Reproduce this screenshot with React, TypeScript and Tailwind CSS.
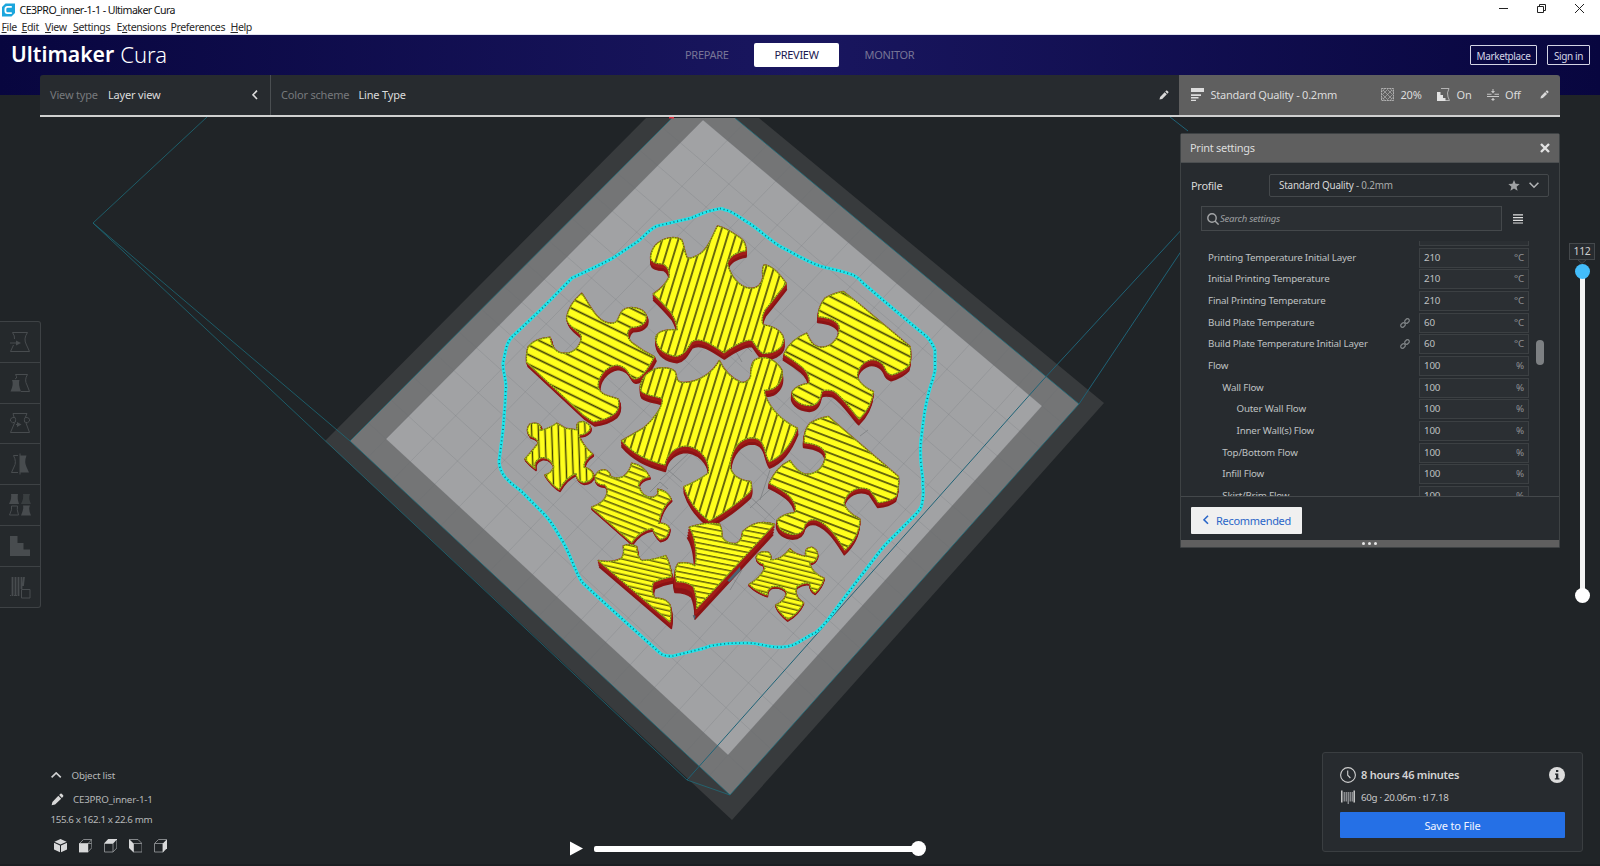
import React from 'react';

type Piece = { d: string; at: [number, number]; depth: [number, number]; fill: string };

const pieces: Piece[] = [
  {
    at: [0, 0], depth: [5, 13], fill: 'sA',
    d: 'M305,310 C330,345 350,400 395,400 C420,400 412,375 430,360 C450,345 490,355 498,375 C503,400 480,412 455,412 C435,425 440,450 465,465 Q490,485 523,500 Q500,545 480,560 Q465,570 458,565 C445,555 445,530 410,525 C375,530 350,565 355,595 C365,620 395,618 415,628 Q420,655 405,670 Q380,690 340,695 L310,675 L140,517 Q138,490 145,470 Q165,445 210,442 C215,470 225,490 255,490 C290,490 308,455 303,435 C290,420 260,405 260,385 Q265,345 305,310Z',
  },
  {
    at: [0, 0], depth: [1, 19], fill: 'sB',
    d: 'M713,108 C700,130 685,180 655,195 Q640,205 622,205 C612,185 612,165 605,150 C590,140 560,140 540,155 C520,165 512,190 512,205 C515,218 530,222 550,222 Q570,235 568,260 Q555,290 520,312 Q545,335 575,370 Q590,395 592,420 C570,418 530,420 527,445 C530,480 560,495 590,499 C615,495 625,470 635,455 C660,440 690,460 732,488 Q785,450 815,450 C825,460 835,485 850,490 C870,492 910,480 911,450 C910,430 890,410 850,405 Q840,390 855,360 Q895,310 918,280 Q880,225 852,225 Q845,240 850,258 C845,290 825,296 810,295 C775,292 750,255 742,220 Q750,190 797,182 Q800,155 775,140 Q740,115 713,108Z',
  },
  {
    at: [0, 0], depth: [1, 19], fill: 'sB',
    d: 'M718,512 C700,545 660,577 610,578 C585,577 592,560 585,545 C570,530 530,530 510,545 C485,560 475,590 485,605 C500,618 530,618 547,626 C550,650 520,690 490,715 L425,752 Q470,805 555,825 C560,790 590,768 620,768 C670,775 690,820 685,850 Q650,875 612,890 Q630,950 688,993 Q750,960 805,910 Q818,900 812,875 C770,870 752,850 750,825 C755,770 785,745 815,743 C860,745 850,790 868,815 Q920,795 952,715 Q880,680 855,615 L853,600 C890,603 912,570 905,540 C885,505 850,495 825,510 Q812,520 812,560 Q805,578 785,578 Q740,560 718,512Z',
  },
  {
    at: [690, 30], depth: [-2, 17], fill: 'sC',
    d: 'M400,275 L445,310 L600,440 Q605,470 598,495 Q580,515 545,525 Q530,520 525,505 C515,480 490,478 480,480 C450,490 440,515 443,535 C455,560 480,570 490,575 Q485,620 448,657 C430,640 400,590 370,573 Q345,567 335,575 Q330,615 300,617 C260,615 245,590 247,575 Q260,555 298,550 Q300,520 275,500 Q250,480 222,463 Q240,420 290,400 C300,420 305,440 335,442 C370,440 390,410 388,380 Q380,355 325,350 Q325,320 345,295 Q370,280 400,275Z',
  },
  {
    at: [690, 660], depth: [-2, 14], fill: 'sD',
    d: 'M355,20 L565,200 Q568,235 558,260 Q540,275 505,278 Q490,255 480,240 C450,225 410,240 402,280 C410,310 440,320 450,328 Q448,380 405,420 C385,390 360,345 320,330 Q295,325 285,345 Q280,375 245,373 C210,368 200,345 202,330 Q220,312 255,308 Q262,285 240,260 Q220,240 178,220 Q200,170 240,152 Q260,185 285,193 C320,195 345,170 347,135 Q345,105 283,98 Q280,65 300,40 Q325,25 355,20Z',
  },
  {
    at: [0, 660], depth: [3, 6], fill: 'sE',
    d: 'M230,40 L256,55 L292,60 Q285,35 310,35 Q338,45 327,62 Q315,75 295,75 Q310,110 337,132 Q310,150 312,172 Q335,178 340,195 Q335,215 310,217 Q290,212 288,190 Q260,200 237,238 Q215,225 195,195 Q215,190 222,170 Q210,140 185,143 Q160,150 165,175 Q145,160 135,147 Q155,125 175,100 Q175,85 150,78 Q135,60 150,42 Q175,35 182,50 L180,62 Q210,55 230,40Z',
  },
  {
    at: [0, 660], depth: [2, 7], fill: 'sF',
    d: 'M455,160 Q490,165 508,200 Q480,205 475,225 Q485,265 520,262 Q540,255 533,238 Q560,240 573,267 Q545,290 535,340 Q560,338 568,355 Q565,385 540,388 Q525,375 518,355 Q480,360 455,398 L335,292 Q385,275 382,235 L375,225 Q345,225 345,200 Q355,178 375,180 Q390,185 390,198 Q405,210 430,200 Q450,185 455,160Z',
  },
  {
    at: [0, 660], depth: [4, 19], fill: 'sG',
    d: 'M430,408 Q450,398 470,410 Q470,440 485,452 Q520,450 557,437 Q570,460 575,500 Q545,505 520,517 Q510,545 525,565 Q555,562 570,585 Q575,612 570,636 L355,452 Q400,460 425,445 Q434,430 430,408Z',
  },
  {
    at: [0, 660], depth: [-5, 32], fill: 'sH',
    d: 'M628,352 Q680,335 718,342 Q728,360 725,380 Q740,405 770,400 Q788,390 788,365 Q830,325 883,343 L650,595 Q652,560 640,530 Q625,515 590,515 Q580,480 595,460 Q625,455 645,468 Q652,440 645,400 Q640,370 628,352Z',
  },
  {
    at: [690, 660], depth: [0, 5], fill: 'sI',
    d: 'M240,417 Q255,435 290,440 Q280,415 305,412 Q325,420 322,440 Q315,460 298,458 Q305,490 342,505 Q335,530 315,548 Q300,540 300,520 Q280,515 260,530 Q250,560 280,578 Q265,610 233,628 Q205,605 198,585 Q230,570 230,545 Q215,525 185,530 Q170,540 172,555 Q140,545 118,523 Q150,505 165,475 L160,462 Q138,455 140,438 Q150,422 175,427 Q185,435 182,450 Q215,450 240,417Z',
  },
];

const hatches: [string, number, number, number][] = [
  ['sA', 26, 26, 6.5], ['sB', -73, 23, 6], ['sC', 27, 26, 6.5], ['sD', 21, 22, 6], ['sE', -92, 20, 5.5],
  ['sF', 21, 18, 5], ['sG', 13, 15, 4.5], ['sH', 11, 16, 4.5], ['sI', 14, 15, 4.5],
];

const skirt =
  'M718,209 C700,212 695,218 687,219 L657,226 C648,230 643,238 637,242 L613,258 C598,266 585,272 572,278 C560,290 545,306 533,317 L512,337 C506,343 506,350 503,363 C503,375 507,380 505.7,390 C505,410 504,415 503,430 L499,462 C500,470 502,473 505,477 C512,485 518,488 523,493 L543,513 C550,520 555,528 560,537 C570,552 575,572 582,582 C592,592 608,606 620,617 L660,653 C665,657 670,656 673,656 L697,650 C705,648 708,647 710,646 C725,643 735,643 747,643 C760,643 770,648 780,647 C795,648 803,638 815,633 C822,628 828,620 833,613 L860,577 C870,565 880,550 887,543 L913,517 C918,512 922,508 922,503 C925,490 922,490 923,480 C920,460 920,450 921,440 C923,425 924,412 927,400 C930,385 934,378 935,370 L935,350 C933,345 930,340 927,337 L897,312 L863,283 C858,277 855,276 853,275 C842,271 830,269 820,266 C808,262 795,254 783,248 C770,241 758,228 747,222 C738,216 730,210 725,210 Q722,208 718,209Z';

const lerp = (a: number[], b: number[], t: number) => [a[0] + (b[0] - a[0]) * t, a[1] + (b[1] - a[1]) * t];

function PlateGrid() {
  const top = [703, 120], right = [1042, 406], bottom = [728, 755], left = [386, 439];
  const n = 14;
  const lines: number[][][] = [];
  for (let i = -1; i <= n + 1; i++) {
    const t = i / n;
    const a1 = lerp(top, right, t), b1 = lerp(left, bottom, t);
    lines.push([lerp(a1, b1, -0.11), lerp(a1, b1, 1.11)]);
    const a2 = lerp(top, left, t), b2 = lerp(right, bottom, t);
    lines.push([lerp(a2, b2, -0.11), lerp(a2, b2, 1.11)]);
  }
  return (
    <g stroke="#6b6f73" strokeOpacity="0.2" strokeWidth="1" clipPath="url(#bed)">
      {lines.map(([a, b], i) => (
        <line key={i} x1={a[0]} y1={a[1]} x2={b[0]} y2={b[1]} />
      ))}
    </g>
  );
}

function Scene() {
  return (
    <svg className="absolute inset-0" width="1600" height="866" viewBox="0 0 1600 866">
      <defs>
        <clipPath id="bed"><polygon points="672,118 735,118 1079,404 730,795 350,441" /></clipPath>
        {hatches.map(([id, angle, gap, w]) => (
          <pattern key={id} id={id} width="60" height={gap} patternUnits="userSpaceOnUse" patternTransform={`rotate(${angle})`}>
            <rect width="60" height={gap} fill="#ffff1c" />
            <rect y={gap / 2} width="60" height={w} fill="#a3a312" />
            <rect y={gap / 2 + w * 0.22} width="60" height={w * 0.56} fill="#3f3f06" />
          </pattern>
        ))}
      </defs>
      <polygon points="646,118 759,118 1104,403 732,820 325,441" fill="#383b3d" />
      <polygon points="672,118 735,118 1079,404 730,795 350,441" fill="#747576" />
      <polygon points="703,120 1042,406 728,755 386,439" fill="#a1a2a4" />
      <PlateGrid />
      <g stroke="#1c6f7e" strokeWidth="1" fill="none">
        <path d="M207,117 L93,223 L350,441 M93,223 L687,780 L730,795 M735,118 L1079,404 L730,795 M672,118 L350,441 L730,795" strokeOpacity="0.75" />
        <path d="M1170,117 L1188,131 M1079,404 L1184,247 M1184,227 L1042,381 M1042,381 L687,780" stroke="#1f6377" />
      </g>
      <rect x="669" y="117" width="5" height="1.5" fill="#e03040" />
      <g stroke="#7d8083" strokeWidth="0.8" fill="none">
        <path d="M722,358 L745,345 L752,352 M735,350 L742,362 M660,480 L690,452 M668,470 L682,482 M650,492 L660,482 L668,489 M745,492 L775,520 M750,508 L780,480 M760,500 L770,470 M730,590 L742,570 M860,436 L868,430" />
      </g>
      <path d={skirt} fill="none" stroke="#1fe6ec" strokeWidth="3.2" />
      <path d={skirt} fill="none" stroke="#12747d" strokeWidth="1.7" strokeDasharray="1 2.8" />
      <g transform="translate(480 190) scale(0.333333)">
        {pieces.map((p, i) => (
          <g key={i} transform={`translate(${p.at[0]} ${p.at[1]})`} strokeLinejoin="round">
            {[1, 0.75, 0.5, 0.25, 0].map((k) => (
              <path key={k} d={p.d} transform={`translate(${p.depth[0] * k} ${p.depth[1] * k})`} fill={k > 0.6 ? '#921316' : '#ab1a1a'} stroke={k > 0.6 ? '#8c1315' : '#a11c18'} strokeWidth="5" />
            ))}
            <path d={p.d} fill={`url(#${p.fill})`} stroke="#9cd01c" strokeWidth="3.5" />
            <path d={p.d} fill="none" stroke="#5d3a0c" strokeWidth="2.4" strokeDasharray="4 4" />
          </g>
        ))}
        <path d="M742,1172 L780,1130 L782,1142 L748,1176Z" fill="#4b6472" />
        <path d="M638,1275 L647,1277 L644,1290Z" fill="#4d6170" />
      </g>
    </svg>
  );
}

const Pencil = ({ s }: { s: number }) => (
  <svg width={s} height={s} viewBox="0 0 12 12" fill="#d8d8d8">
    <path d="M0.6 11.4 L1.3 8.3 L6.8 2.6 L9.4 5.2 L3.8 10.7Z M7.5 1.9 L8.7 0.7 Q9.3 0.3 9.9 0.8 L11.2 2.1 Q11.7 2.7 11.2 3.3 L10.1 4.5Z" />
  </svg>
);

const Chevron = ({ d, w, h }: { d: string; w: number; h: number }) => (
  <svg width={w} height={h} viewBox={`0 0 ${w} ${h}`} fill="none" stroke="currentColor" strokeWidth="1.6"><path d={d} /></svg>
);

const tools = [
  <g key="move"><path d="M2.5 0.5 H17.5 Q13 7 16.5 13 L19.5 19.5 H0.5 L3.5 13 M4.5 7 Q5 4 2.5 0.5" fill="none" /><path d="M0 11 H8" /><path d="M6 8.5 L11 11 L6 13.5Z" stroke="none" /></g>,
  <g key="scale"><path d="M5 6 L6.5 5 Q7 3.5 5.5 1.5 H17.5 Q14 7 17 12 L19.5 18.5 H11" fill="none" /><path d="M2 7 H9.5 Q8 11 11 18.5 H0.5 Q4 11 2 7Z" stroke="none" /></g>,
  <g key="rotate"><path d="M3 0.5 H17 L15.5 4 M4.5 10 L0.5 19.5 H19.5 L16 10 M4 4 L3 0.5" fill="none" /><path d="M5 4.5 Q0 4 0.5 8 Q2 11 5.5 9 Q6 6 5 4.5 M15 4.5 Q20 4 19.5 8 Q18 11 14.5 9 Q14 6 15 4.5" fill="none" /><path d="M6 11.5 H8" /><path d="M7 9 L11.5 11.5 L7 14Z" stroke="none" /></g>,
  <g key="mirror"><path d="M8 1.5 H3.5 Q7 8 4 13 L1.5 18.5 H8" fill="none" /><path d="M10 1.5 H16.5 Q14 8 16.5 13 L19 18.5 H10Z" stroke="none" /><path d="M10 -0.5 V20.5" /></g>,
  <g key="each" stroke="none"><path d="M1 -1 H8 Q7 3 9 9 H-1 Q2 3 1 -1Z" /><path d="M13 -1 H20 Q18 3 21 9 H11 Q14 3 13 -1Z" opacity="0.6" /><path d="M13 10.5 H20 Q18 14 21 20.5 H11 Q14 14 13 10.5Z" /><path d="M1.5 11 H7.5 Q6.5 14 8.5 20 H-0.5 Q2.5 14 1.5 11Z" fill="none" stroke="#484c4f" /></g>,
  <path key="support" d="M0 0 H7.5 V7 H13.5 V13.5 H20 V20 H0Z" stroke="none" />,
  <g key="blocker"><path d="M2.5 0 V19 M5.5 0 V19 M8.5 0 V19 M11.5 0 V12 M14 0 L13 9" strokeWidth="1.8" fill="none" /><path d="M11.5 12.5 H20 V21 H11.5Z" fill="none" /><path d="M0 18.5 H10" strokeDasharray="1 1" /></g>,
];

const settings: [string, number, string, string, boolean?][] = [
  ['Printing Temperature', 0, '210', '°C'],
  ['Printing Temperature Initial Layer', 0, '210', '°C'],
  ['Initial Printing Temperature', 0, '210', '°C'],
  ['Final Printing Temperature', 0, '210', '°C'],
  ['Build Plate Temperature', 0, '60', '°C', true],
  ['Build Plate Temperature Initial Layer', 0, '60', '°C', true],
  ['Flow', 0, '100', '%'],
  ['Wall Flow', 1, '100', '%'],
  ['Outer Wall Flow', 2, '100', '%'],
  ['Inner Wall(s) Flow', 2, '100', '%'],
  ['Top/Bottom Flow', 1, '100', '%'],
  ['Infill Flow', 1, '100', '%'],
  ['Skirt/Brim Flow', 1, '100', '%'],
];
const indent = ['pl-0', 'pl-[14.3px]', 'pl-[28.5px]'];

function PrintSettings() {
  return (
    <div className="mt-[16px] flex h-[415px] w-[380px] flex-col rounded-t-[2px] border border-[#3e4244] bg-[#272b2f]">
      <div className="flex h-[29px] shrink-0 items-center justify-between border-b border-[#4c4f51] bg-[#5f5f5f] pb-px pl-[9px] pr-[9px] text-[11px] tracking-[-0.28px] text-[#dcdcdc]">
        <span>Print settings</span>
        <svg width="10" height="10" viewBox="0 0 10 10" stroke="#e2e2e2" strokeWidth="2.4"><path d="M1 1 L9 9 M9 1 L1 9" /></svg>
      </div>
      <div className="mt-[11px] flex h-[23px] shrink-0 items-center pl-[10px]">
        <span className="w-[78px] text-[11px] tracking-[-0.28px] text-[#d8d8d8]">Profile</span>
        <div className="flex h-[23px] w-[280px] items-center rounded-[2px] border border-[#44484b] bg-[#272b2f] pl-[9px] text-[9.9px] tracking-[-0.2px] text-[#d8d8d8]">
          <span className="flex-1 whitespace-nowrap">Standard Quality <span className="text-[#a9abac]">- 0.2mm</span></span>
          <svg width="12" height="11" viewBox="0 0 12 11" fill="#9fa1a3"><path d="M6 0 L7.6 3.7 L11.7 4 L8.6 6.7 L9.6 10.7 L6 8.5 L2.4 10.7 L3.4 6.7 L0.3 4 L4.4 3.7Z" /></svg>
          <span className="ml-[9px] mr-[9px] text-[#b2b4b6]"><Chevron d="M0.6 0.8 L5 5.2 L9.4 0.8" w={10} h={7} /></span>
        </div>
      </div>
      <div className="mt-[9px] flex h-[25px] shrink-0 items-center pl-[20px]">
        <div className="flex h-[25px] w-[301px] items-center border border-[#44484b] bg-[#2b2f33] pl-[5px]">
          <svg width="12" height="12" viewBox="0 0 12 12" fill="none" stroke="#a4a6a8" strokeWidth="1.4"><circle cx="5" cy="5" r="4.2" /><path d="M8 8 L11.6 11.6" /></svg>
          <span className="pl-[1px] text-[9.6px] italic tracking-[-0.28px] text-[#9d9fa1]">Search settings</span>
        </div>
        <svg className="ml-[11px]" width="10" height="10" viewBox="0 0 10 10" fill="#dfdfdf"><path d="M0 0.3 H10 V1.5 H0Z M0 3 H10 V4.2 H0Z M0 5.7 H10 V6.9 H0Z M0 8.4 H10 V9.6 H0Z" /></svg>
      </div>
      <div className="mt-[10px] flex h-[255px] shrink-0 overflow-hidden pl-[27px]">
        <div className="-mt-[15px] flex w-[321px] shrink-0 flex-col">
          {settings.map(([name, level, value, unit, linked]) => (
            <div key={name} className="flex h-[21.667px] shrink-0 items-start text-[9.75px] tracking-[-0.18px] text-[#bfc1c2]">
              <div className={`flex h-[20px] flex-1 items-center whitespace-nowrap ${indent[level]}`}>{name}</div>
              {linked && (
                <svg className="mr-[9px] mt-[5px]" width="10" height="10" viewBox="0 0 10 10" fill="none" stroke="#7c8083" strokeWidth="1.3">
                  <rect x="-2.5" y="-1.8" width="5" height="3.6" rx="1.8" transform="translate(3 7) rotate(-45)" />
                  <rect x="-2.5" y="-1.8" width="5" height="3.6" rx="1.8" transform="translate(7 3) rotate(-45)" />
                </svg>
              )}
              <div className="flex h-[20px] w-[110px] items-center justify-between border border-[#3c4043] bg-[#2b2f33] px-[4px]">
                <span>{value}</span>
                <span className="text-[#8f9193]">{unit}</span>
              </div>
            </div>
          ))}
        </div>
        <div className="ml-[7px] mt-[99px] h-[25px] w-[8px] rounded-full bg-[#7d8083]" />
      </div>
      <div className="flex min-h-0 flex-1 items-start border-t border-[#44484b] pl-[10px] pt-[10px]">
        <div className="flex h-[27px] w-[111px] items-center rounded-[1px] bg-[#f0f0f0] pb-px pl-[12px] text-[11px] tracking-[-0.3px] text-[#2a66c8]">
          <Chevron d="M5 0.8 L1 4.8 L5 8.8" w={6} h={10} />
          <span className="pl-[7px]">Recommended</span>
        </div>
      </div>
      <div className="flex h-[7px] shrink-0 items-center justify-center gap-[3px] bg-[#5f5f5f] pr-px">
        <span className="size-[3px] rounded-full bg-[#e6e6e6]" />
        <span className="size-[3px] rounded-full bg-[#e6e6e6]" />
        <span className="size-[3px] rounded-full bg-[#e6e6e6]" />
      </div>
    </div>
  );
}

function LayerSlider() {
  return (
    <div className="ml-[9px] mt-[126px] flex w-[26px] flex-col items-center">
      <div className="flex h-[17px] w-[26px] items-center justify-center border border-[#44484b] bg-[#272b2f] text-[10.5px] tracking-[-0.3px] text-[#cfcfcf]">112</div>
      <svg width="8" height="4" viewBox="0 0 8 4" fill="#272b2f" stroke="#44484b"><path d="M0 0 L4 3.5 L8 0" /></svg>
      <div className="z-10 size-[15px] rounded-full bg-[#43bdfb]" />
      <div className="-my-[2px] h-[313px] w-[5px] bg-[#f4f4f4]" />
      <div className="size-[15px] rounded-full bg-white" />
    </div>
  );
}

const cubes = [
  <g key="a" fill="#d8d9da"><path d="M6.5 0 L12.6 2.7 L6.5 5.4 L0.4 2.7Z M0 3.8 L6 6.4 V13.2 L0 10.4Z M13 3.8 L7 6.4 V13.2 L13 10.4Z" /></g>,
  <g key="b"><path d="M0.5 4.5 L4.5 0.5 H12.8 V8.8 L9 12.8 M9 4.5 L12.8 0.5 M8.8 4.5 H12.5" fill="none" stroke="#8f9294" strokeWidth="0.9" /><path d="M0 4.2 H9.2 V13.4 H0Z" fill="#d8d9da" /></g>,
  <g key="c"><path d="M0.5 4.5 H9 V13 H0.5Z M9 13 L12.8 9 V0.5" fill="none" stroke="#8f9294" strokeWidth="0.9" /><path d="M0 4.5 L4.2 0 H13.2 L9.2 4.5Z" fill="#d8d9da" /></g>,
  <g key="d"><path d="M4.5 4.5 H13 V13 H4.5Z M0.5 0.5 H9 L13 4.5" fill="none" stroke="#8f9294" strokeWidth="0.9" /><path d="M0 0 L4.6 4.4 V13.4 L0 9Z" fill="#d8d9da" /></g>,
  <g key="e"><path d="M0.5 4.5 H9 V13 H0.5Z M0.5 4.5 L4.5 0.5 H13" fill="none" stroke="#8f9294" strokeWidth="0.9" /><path d="M13.2 0 L8.8 4.4 V13.4 L13.2 9Z" fill="#d8d9da" /></g>,
];

const menus = [
  ['', 'F', 'ile', 'w-[20px]'], ['', 'E', 'dit', 'w-[23.5px]'], ['', 'V', 'iew', 'w-[28px]'], ['', 'S', 'ettings', 'w-[43.5px]'],
  ['E', 'x', 'tensions', 'w-[54px]'], ['P', 'r', 'eferences', 'w-[60px]'], ['', 'H', 'elp', 'w-[30px]'],
];

export default function App() {
  return (
    <div className="relative flex h-[866px] w-[1600px] flex-col overflow-hidden bg-[#202427] font-['Noto_Sans','Open_Sans',sans-serif] leading-none">
      <Scene />
      <div className="relative flex h-[19px] shrink-0 items-center bg-white pl-[2px] text-[10.6px] tracking-[-0.55px] text-[#111]">
        <svg width="13" height="14" viewBox="0 0 13 14"><path d="M3.5 0.5 H13 V10 L9.5 13.5 H0 V4Z" fill="#1ba6dd" /><path d="M9.8 3.8 H5.4 Q3.4 4 3.4 6 V8 Q3.4 10 5.4 10.2 H9.8" fill="none" stroke="#fff" strokeWidth="1.8" /></svg>
        <span className="ml-[4.5px] flex-1 pt-px">CE3PRO_inner-1-1 - Ultimaker Cura</span>
        <div className="mr-[16.5px] flex items-center gap-[29px] pb-[2px]">
          <svg width="9" height="9" viewBox="0 0 9 9" stroke="#222"><path d="M0 4.5 H9" /></svg>
          <svg width="9" height="9" viewBox="0 0 9 9" fill="none" stroke="#222"><path d="M0.5 2.5 H6.5 V8.5 H0.5Z M2.5 2.5 V0.5 H8.5 V6.5 H6.5" /></svg>
          <svg width="9" height="9" viewBox="0 0 9 9" stroke="#222"><path d="M0 0 L9 9 M9 0 L0 9" /></svg>
        </div>
      </div>
      <div className="relative flex h-[16px] shrink-0 items-center border-b border-[#dfe1ee] bg-white pl-[1.5px] pt-[2px] text-[10.6px] tracking-[-0.4px] text-[#2a2a2a]">
        {menus.map(([a, u, b, w]) => (
          <span key={u + b} className={`shrink-0 ${w}`}>{a}<span className="underline underline-offset-1">{u}</span>{b}</span>
        ))}
      </div>
      <header className="relative flex h-[60px] shrink-0 items-start bg-[linear-gradient(90deg,#08063f_0%,#19165f_50%,#08063f_100%)]">
        <div className="flex h-[38px] w-[676px] items-center pl-[11px] text-white">
          <span className="text-[21.2px] font-semibold">Ultimaker</span>
          <span className="pl-[6px] text-[22px] font-light">Cura</span>
        </div>
        <div className="flex h-[39px] flex-1 items-center text-[11px] tracking-[-0.3px] text-[#777596]">
          <span className="w-[78px] pl-[9px]">PREPARE</span>
          <span className="flex h-[24px] w-[85px] items-center justify-center rounded-[2px] bg-white text-[#1b1850]">PREVIEW</span>
          <span className="pl-[25.5px]">MONITOR</span>
        </div>
        <div className="mr-[10px] flex h-[40px] items-center gap-[10px] text-[10px] tracking-[-0.4px] text-[#d4d4e4]">
          <span className="flex h-[20px] w-[67px] items-center justify-center rounded-[1px] border border-[#d4d4e4] pt-px">Marketplace</span>
          <span className="flex h-[20px] w-[43px] items-center justify-center rounded-[1px] border border-[#d4d4e4] pt-px">Sign in</span>
        </div>
      </header>
      <div className="relative mx-[40px] -mt-[20px] flex h-[42px] shrink-0 border-b-2 border-[#cfd0d0] text-[11px] tracking-[-0.18px] text-[#dcdcdc] [&>*]:bg-[#272b2f] [&>*]:pb-px">
        <div className="flex w-[230px] items-center rounded-tl-[3px] pl-[10px] pr-[12px]">
          <span className="w-[58px] text-[#777a7d]">View type</span>
          <span className="flex-1">Layer view</span>
          <Chevron d="M5 0.6 L1 4.8 L5 9" w={6} h={10} />
        </div>
        <div className="flex flex-1 items-center border-l border-[#4a4e51] pl-[10px] pr-[10px]">
          <span className="w-[77.5px] text-[#777a7d]">Color scheme</span>
          <span className="flex-1">Line Type</span>
          <Pencil s={10} />
        </div>
        <div className="flex w-[381px] items-center rounded-tr-[3px] !bg-[#5f5f5f] pl-[12px] pr-[11px]">
          <svg width="13" height="13" viewBox="0 0 13 13" fill="#dcdcdc"><path d="M0 0 H13 V4 H0Z M0 6.2 H10 V8 H0Z M0 9 H7.5 V10.5 H0Z M0 11.8 H5 V13 H0Z" /></svg>
          <span className="flex-1 pl-[6.5px] tracking-[-0.23px]">Standard Quality - 0.2mm</span>
          <svg width="13" height="13" viewBox="0 0 13 13" fill="none" stroke="#c4c4c4" strokeWidth="0.8"><path d="M0.5 0.5 H12.5 V12.5 H0.5Z" strokeDasharray="2 0.6" /><path d="M0.5 4 L4 0.5 M9 0.5 L12.5 4 M12.5 9 L9 12.5 M4 12.5 L0.5 9 M6.5 1.5 L11.5 6.5 L6.5 11.5 L1.5 6.5Z M2 2 L11 11 M11 2 L2 11" strokeOpacity="0.7" /></svg>
          <span className="w-[43px] pl-[6.5px]">20%</span>
          <svg width="13" height="13" viewBox="0 0 13 13"><path d="M4 0.5 H12 Q9.5 5 11 9 L12.5 12.5 H8" fill="none" stroke="#bdbdbd" strokeWidth="0.9" /><path d="M0 4 H3.5 V7 H6 V10 H8.5 V13 H0Z" fill="#e2e2e2" /></svg>
          <span className="w-[37px] pl-[6.5px]">On</span>
          <svg width="12" height="12" viewBox="0 0 12 12" fill="#c8c8c8"><path d="M0 4.8 H4.5 V5.8 H0Z M7.5 4.8 H12 V5.8 H7.5Z M0 7 H12 V8 H0Z M5.5 0 H6.5 V2 H8 L6 4.6 L4 2 H5.5Z M5.5 12.3 H6.5 V11 H8 L6 8.8 L4 11 H5.5Z" /></svg>
          <span className="w-[41px] pl-[6px]">Off</span>
          <Pencil s={9} />
        </div>
      </div>

      <main className="relative flex min-h-0 flex-1">
        <div className="flex w-[400px] flex-col">
          <div className="mt-[204px] flex w-[41px] flex-col rounded-r-[3px] border border-l-0 border-[#3e4245] bg-[#25292c]">
            {tools.map((icon, i) => (
              <div key={i} className={`flex h-[40.75px] items-center pl-[10px] ${i < 6 ? 'border-b border-[#3e4245]' : ''}`}>
                <svg className="overflow-visible" width="20" height="20" viewBox="0 0 20 20" fill="#484c4f" stroke="#484c4f">{icon}</svg>
              </div>
            ))}
          </div>
          <div className="mt-auto pb-[11px] pl-[50.5px] text-[9.75px] tracking-[-0.18px] text-[#b6b8b9]">
            <div className="flex h-[20px] items-center pt-px text-[#d0d1d2]">
              <Chevron d="M0.6 5.4 L5.2 0.9 L9.8 5.4" w={11} h={8} />
              <span className="pl-[10px] text-[#b6b8b9]">Object list</span>
            </div>
            <div className="mt-[4px] flex h-[20px] items-center pt-px">
              <Pencil s={13} />
              <span className="pl-[9.5px]">CE3PRO_inner-1-1</span>
            </div>
            <div className="mt-[1px] flex h-[20px] items-center tracking-[-0.38px]">155.6 x 162.1 x 22.6 mm</div>
            <div className="mt-[9px] flex gap-[12px] pl-[3px]">
              {cubes.map((c, i) => (
                <svg key={i} width="13" height="14" viewBox="0 0 13 14">{c}</svg>
              ))}
            </div>
          </div>
        </div>

        <div className="flex flex-1 items-end pb-[8px] pl-[170px]">
          <svg width="13" height="15" viewBox="0 0 13 15" fill="#fff"><path d="M0 0.5 L13 7.5 L0 14.5Z" /></svg>
          <div className="ml-[11px] flex h-[15px] items-center">
            <div className="h-[6px] w-[319px] rounded-l-[2px] bg-white" />
            <div className="-ml-[2px] size-[15px] rounded-full bg-white" />
          </div>
        </div>

        <div className="flex w-[420px] flex-col">
          <div className="flex items-start">
            <PrintSettings />
            <LayerSlider />
          </div>
          <div className="mb-[12px] mr-[17px] mt-auto flex h-[100px] w-[261px] flex-col self-end rounded-[3px] border border-[#3a3e41] bg-[#272b2f] pl-[17px] pr-[17px] pt-[13px]">
            <div className="flex h-[17px] items-center">
              <svg width="16" height="16" viewBox="0 0 16 16" fill="none" stroke="#cfcfcf" strokeWidth="1.1"><circle cx="8" cy="8" r="7.4" /><path d="M7.7 3.4 V8.2 L10.4 11" /></svg>
              <span className="flex-1 pl-[5px] text-[11px] font-semibold tracking-[-0.24px] text-[#d4d4d4]">8 hours 46 minutes</span>
              <svg width="16" height="16" viewBox="0 0 16 16"><circle cx="8" cy="8" r="8" fill="#dcdcdc" /><path d="M7 3 H9.3 V5 H7Z M6 6.4 H9.3 V11.2 H10.4 V12.6 H5.8 V11.2 H7 V7.8 H6Z" fill="#272b2f" /></svg>
            </div>
            <div className="mt-[6px] flex h-[17px] items-center">
              <svg className="ml-[1px]" width="14" height="15" viewBox="0 0 14 15" stroke="#b4b6b8" strokeWidth="1"><path d="M0.8 0.5 V12.5 M13.2 0.5 V12.5" strokeWidth="1.4" stroke="#d4d4d4" /><path d="M3.2 2 V11.5 M5.2 2 V11.5 M7.2 2 V14 M9.2 2 V11.5 M11.2 2 V11.5" /></svg>
              <span className="pl-[6px] text-[9.75px] tracking-[-0.32px] text-[#c6c7c8]">60g · 20.06m · tl 7.18</span>
            </div>
            <div className="mt-[6px] flex h-[26px] items-center justify-center rounded-[1px] bg-[#2570e6] text-[11px] tracking-[-0.15px] text-[#f0f4ff]">Save to File</div>
          </div>
        </div>
      </main>
      <div className="relative h-[2px] shrink-0 bg-[#1b1f22]" />
    </div>
  );
}
